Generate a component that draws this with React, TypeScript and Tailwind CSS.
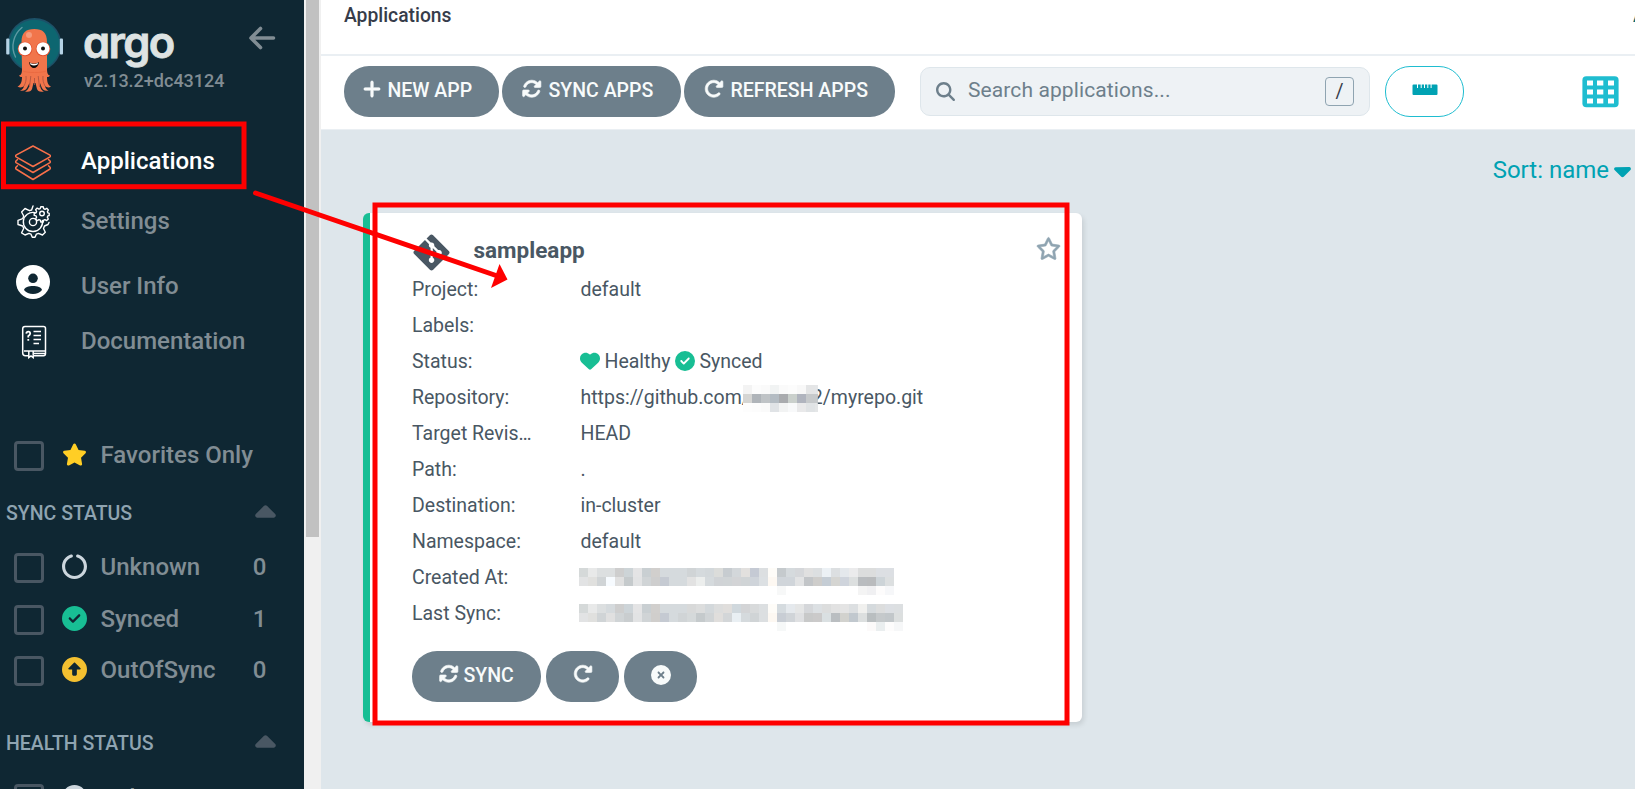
import type { ReactNode } from 'react';
import {
  FaCaretDown,
  FaCaretUp,
  FaCircleCheck,
  FaCircleNotch,
  FaCircleQuestion,
  FaCircleUp,
  FaCircleXmark,
  FaGitAlt,
  FaHeart,
  FaMagnifyingGlass,
  FaPlus,
  FaRegStar,
  FaRotate,
  FaRotateRight,
  FaStar,
} from 'react-icons/fa6';

const CREATED = [
  'd5d9d9 e8e9e9 dcdfe0 dcdfe0 cecece cdd4d7 e4e4e5 c9cfd2 d1cfcd d5dadd d5dadd d5dadd d0d4d6 d5dadd d3d8db dbdcda c7ccd0 d3d7da e2e0de c5cad4 dcdfe1 fefcf8 c5cacd d5dadd d5d7da e0e0e0 dcdfe1 ecf1f5 dcdfe1 e4e8ec ebebec dcdddd dcdddd dcdfe3 dcdfe3',
  'e2e3e4 e0e0de d0d4d6 f7fbff e0e0e0 c5cacc e2e3e4 d0d4d6 cecece c5cad2 d5dadd d5dadd e2e2e2 eceeed d5dadd d0d3d6 d0d4d6 d3d4d6 d0d4d6 cfd4da dce0e3 fdf8f2 d0d5da d0d5da e2e3e4 c2c5c8 cecdcb c5cdd5 d5d5d2 cfd4dc dcdfdf b9bcbf b9bbbd cdd4d8 dcdfe0',
  '- - - - - - - - - - - - - - - - - - - - - - f7f8f8 - - - - - - - - f4f4f4 f0f0f2 fdfcfc f6f7f9',
];
const LAST_SYNC = [
  'd5d9d9 e8e9e9 dcdfe0 d5dadd cecece cdd4d8 e4e4e5 c9cfd2 d1cfcd d5dadd d5dadd d5dadd d8d9d9 dcdddd d3d8db dcdddd e0dedc d0d8dd d3d4d6 d8dadb dcdfe1 fefcf8 d5dbdf e5e9ed e5e6e6 d5d7da dce0e3 dcdddd e2e2e2 e4e4e4 dcdfe1 f0f0ee d5dadd dcdddd dcdfe3 dcdfe1',
  'e2e3e4 e0e0de d0d4d6 e0e0e0 d0d4d6 c9cdcf e2e3e4 d0d4d6 d0cecc c5cad2 d5dadd d0d4d6 d5d9da c5cacc d0d4d6 e0dedc d3d6d8 e9eff3 d5dadd d0d4d6 dcdfe1 fdf8f2 c8cdd4 d0d4d8 dfe0e2 c8c9c9 cbcaca dae0e2 babec1 d2d2ce c1c8ce dcdfdf b9bec0 c5c9cb c2c7ca dcdfdf',
  '- - - - - - - - - - - - - - - - - - - - - - f6f8f8 - - - - - - - - - fcfafa eaeeef fdfcfc f6f7f8',
];
const OWNER = [
  'f3f3f3 fcfcfc fafafa f1f3f3 fafafa fcfcfc f8f8f8 e4e5e6 e4e6e8',
  'd5d5d3 afb4b9 bfc3c6 b4bcc3 a9abae cad0cc b0b4be c6c9cb c6c9cb',
  'fdfdfd fcfcfc fafafa e0e3e6 f2f3f3 f8f9fa e9e9ea e0e3e5 e4e6e7',
];

function Mosaic({ rows }: { rows: string[] }) {
  return (
    <span className="flex flex-col">
      {rows.map((row, i) => (
        <span key={i} className="flex h-[9px]">
          {row.split(' ').map((c, j) => (
            <span
              key={j}
              className="h-[9px] w-[9px] shrink-0"
              style={{ backgroundColor: c === '-' ? 'transparent' : `#${c}` }}
            />
          ))}
        </span>
      ))}
    </span>
  );
}

function Mascot() {
  return (
    <svg width="58" height="76" viewBox="0 0 58 76" className="block">
      <circle cx="28.5" cy="28" r="27" fill="#1d5168" />
      <circle cx="28.5" cy="28" r="25.3" fill="#0d6670" />
      <rect x="0.2" y="21.500" width="3.2" height="16" rx="1" fill="#b5d3e6" />
      <rect x="53.8" y="21.500" width="3.2" height="16" rx="1" fill="#b5d3e6" />
      <path d="M9.5 40 C4 29 8 17 16 10.5" fill="none" stroke="#5e9aa3" strokeWidth="1.4" strokeLinecap="round" />
      <path
        d="M15.5 25 C15.500 15.500 20 12 28.300 12 C36.600 12 41 15.500 41 25 L41 52 C41 56.500 42 58 44 58.500 C43 60 42 60.200 41 60 C41 65 42 68.500 45 69.500 C43 71 40.500 70.500 39 69 C39.500 71.500 41 73 42.500 73.500 C39 74.500 36.500 73 35.500 70 L34 66 C34 71 35 73 38 74.500 C34 75.500 31.500 74 31 72 L29.500 66 H27.500 L26 72 C25.500 74 23 75.500 19 74.500 C22 73 23.300 71 23.500 66 L21.500 70 C20.500 73 17.500 74.500 14 73.500 C16 73 17.500 71.500 18 69 C16.500 70.500 14 71 11.500 69.500 C14.500 68.500 16 65 16 60 C15 60.200 14 60 13 58.500 C15 58 16 56.500 16 52 Z"
        fill="#f1754b"
      />
      <path d="M17 54 C20 56 37 56 40 54" fill="none" stroke="#e8673f" strokeWidth="0.8" />
      <path d="M20 59 C20.500 63 19.500 66 18 69 M24.800 59 L23.500 70 M28.500 61 V68 M32.200 59 L33.500 70 M37 59 C36.500 63 37.500 66 39 69" fill="none" stroke="#a9503d" strokeWidth="0.8" />
      <circle cx="23" cy="18" r="3" fill="#f69b7c" />
      <circle cx="19" cy="32" r="7.300" fill="#e2512f" />
      <circle cx="37" cy="32" r="7.300" fill="#e2512f" />
      <circle cx="19" cy="31.700" r="6.500" fill="#fff" />
      <circle cx="37" cy="31.700" r="6.500" fill="#fff" />
      <circle cx="19" cy="31.500" r="2" fill="#111" />
      <circle cx="37" cy="31.500" r="2" fill="#111" />
      <path d="M23 45 C24 53 32 53 33 45 C30 47.300 26 47.300 23 45Z" fill="#0b0b0b" />
      <path d="M24 45.700 C26.500 47.500 29.500 47.500 32 45.700 L31.500 47.500 C29.500 48.700 26.500 48.700 24.500 47.500Z" fill="#fff" />
    </svg>
  );
}

function LayersIcon() {
  return (
    <svg width="36" height="36" viewBox="0 0 36 36" fill="none" stroke="#f9704a" strokeWidth="1.5" strokeLinejoin="round" strokeLinecap="round" className="block">
      <path d="M18 1 L35 10.200 Q35.800 11 35 11.800 L18 21.500 L1 11.800 Q0.200 11 1 10.200 Z" />
      <path d="M2.500 14.500 L1 16 Q0.300 17 1 17.600 L18 27.500 L35 17.600 Q35.700 17 35 16 L33.500 14.500" />
      <path d="M2.500 20.800 L1 22.300 Q0.300 23.300 1 24 L18 34.500 L35 24 Q35.700 23.300 35 22.300 L33.500 20.800" />
    </svg>
  );
}

function GearsIcon() {
  return (
    <svg width="33" height="33" viewBox="0 0 33 33" fill="none" stroke="#fff" strokeWidth="1.400" strokeLinejoin="round" strokeLinecap="round" className="block">
      <circle cx="16" cy="17" r="3.600" />
      <path d="M18 7.600 A9.600 9.600 0 1 0 25.400 15.500" />
      <path d="M16 1 L14.600 5 L12.500 5.700 L8 3.500 L4.600 7 L6.700 11 L5.700 13.700 L1 15.300 V19.500 L5.700 21 L6.700 23.500 L4.600 27.800 L8 30 L12 28.400 L14 29.200 L15.300 32.300 H18 L19.300 29.200 L21.500 28.400 L25.500 30 L28.300 27.300 L26.500 23.500 L27.500 21 L31 19.500 L32 17.500" />
      <circle cx="25" cy="8.500" r="2.300" />
      <path d="M23.800 1.800 h2.400 l.5 1.900 l1.300 .6 l1.800 -1 l1.600 1.600 l-1 1.800 l.5 1.200 l1.300 .4 v2.200 l-1.400 .4 l-.5 1.300 l1 1.800 l-1.600 1.600 l-1.800 -1 l-1.200 .5 l-.5 1.900 h-2.400 l-.5 -1.900 l-1.300 -.5 l-1.800 1 l-1.600 -1.600 l1 -1.800 l-.5 -1.300 l-1.900 -.5 v-2.200 l1.900 -.5 l.5 -1.200 l-1 -1.800 l1.600 -1.600 l1.800 1 l1.200 -.5 z" />
    </svg>
  );
}

function UserIcon() {
  return (
    <svg width="34" height="34" viewBox="0 0 34 34" className="block">
      <circle cx="17" cy="17" r="17" fill="#fff" />
      <circle cx="17" cy="13.300" r="4.800" fill="#0f2733" />
      <path d="M8 25 C9 19.700 25 19.700 26 25 C22 30.400 12 30.400 8 25Z" fill="#0f2733" />
    </svg>
  );
}

function DocsIcon() {
  return (
    <svg width="26" height="34" viewBox="0 0 26 34" fill="none" stroke="#fff" strokeWidth="1.500" className="block">
      <path d="M8 30.700 H4.500 Q1.700 30.700 1.700 28 V3.800 Q1.700 1.500 4 1.500 H22.500 Q24.500 1.500 24.500 3.500 V28.500 Q24.500 30.700 22.500 30.700 H12.500" />
      <path d="M3 26 H24 M13 28.400 H24" />
      <path d="M7.800 26 V32.600 L10 31 L12.200 32.600 V26" />
      <path d="M5.300 8.600 Q5.500 6.600 7.300 6.600 Q9.200 6.600 9.200 8.600 Q9.200 10 7.300 11 V12.500 M7.300 14 V15.800" strokeWidth="1.800" />
      <path d="M12.500 6.500 H20 M12.500 10.500 H20 M12.500 14.500 H20 M12.500 18.500 H18" strokeWidth="1.600" />
    </svg>
  );
}

function NavItem({ icon, label, active, className }: { icon: ReactNode; label: string; active?: boolean; className: string }) {
  return (
    <div className={`flex shrink-0 items-center ${className}`}>
      <span className="flex w-[66px] shrink-0 justify-center">{icon}</span>
      <span className={`pl-[15px] text-2xl leading-7 font-medium ${active ? 'text-white' : 'text-[#818d94]'}`}>{label}</span>
    </div>
  );
}

function FilterRow({ icon, label, count, className }: { icon: ReactNode; label: string; count?: string; className: string }) {
  return (
    <div className={`flex h-[30px] shrink-0 items-center pl-3.5 ${className}`}>
      <span className="h-[30px] w-[30px] shrink-0 rounded-[4px] border-[3px] border-[#495763]" />
      <span className="-mt-1 ml-[18px] flex w-[25px] justify-center">{icon}</span>
      <span className="-mt-0.5 ml-[13.5px] text-2xl leading-7 font-medium text-[#818d94]">{label}</span>
      {count && <span className="-mt-0.5 mr-[37.5px] ml-auto text-2xl leading-7 font-medium text-[#818d94]">{count}</span>}
    </div>
  );
}

function SectionTitle({ label, className }: { label: string; className: string }) {
  return (
    <div className={`flex h-6 shrink-0 items-center justify-between pr-[23.5px] pl-1.5 ${className}`}>
      <span className="mt-[3px] text-[19.5px] leading-6 font-medium text-[#8fa4b1]">{label}</span>
      <FaCaretUp size={33} className="mt-[2px] -mr-px text-[#495763]" />
    </div>
  );
}

function Sidebar() {
  return (
    <aside className="flex h-full w-[304px] shrink-0 flex-col overflow-hidden bg-[#0f2733]">
      <div className="flex h-[130px] shrink-0 pt-[17px] pl-1.5">
        <Mascot />
        <div className="flex flex-col pl-5">
          <span className="-ml-px h-[46px] font-['Inter'] text-[43.5px] leading-[51px] font-semibold tracking-[-1.6px] text-[#dee3e3] [font-feature-settings:'cv11'] [-webkit-text-stroke:0.8px_#dee3e3]">
            argo
          </span>
          <span className="mt-[8px] text-lg leading-5 font-medium text-[#818d94]">v2.13.2+dc43124</span>
        </div>
        <svg width="28" height="24" viewBox="0 0 28 24" className="mt-[9px] ml-[23px]" fill="none" stroke="#818d94" strokeWidth="3.600" strokeLinecap="round" strokeLinejoin="round">
          <path d="M25.500 12 H3 M12.500 2.500 L3 12 L12.500 21.500" />
        </svg>
      </div>
      <NavItem className="h-[62px]" active label="Applications" icon={<span className="mt-1"><LayersIcon /></span>} />
      <NavItem className="h-[58px]" label="Settings" icon={<GearsIcon />} />
      <NavItem className="h-[72px]" label="User Info" icon={<span className="-mt-[9px]"><UserIcon /></span>} />
      <NavItem className="h-[38px]" label="Documentation" icon={<span className="mt-px ml-px"><DocsIcon /></span>} />

      <FilterRow className="mt-[81px]" label="Favorites Only" icon={<FaStar size={25} className="text-[#ffce25]" />} />
      <SectionTitle className="mt-[29px]" label="SYNC STATUS" />
      <FilterRow className="mt-[29px]" label="Unknown" count="0" icon={<FaCircleNotch size={25} className="text-[#ccd6dd]" />} />
      <FilterRow className="mt-[22px]" label="Synced" count="1" icon={<FaCircleCheck size={25} className="text-[#18be94]" />} />
      <FilterRow className="mt-[21px]" label="OutOfSync" count="0" icon={<FaCircleUp size={25} className="text-[#f4c030]" />} />
      <SectionTitle className="mt-[44px]" label="HEALTH STATUS" />
      <FilterRow className="mt-[30px]" label="Unknown" count="0" icon={<FaCircleQuestion size={25} className="text-[#ccd6dd]" />} />
    </aside>
  );
}

const pill = 'flex h-[51px] items-center rounded-[25px] bg-[#6d7f8b] text-[19.5px] font-medium text-[#f8fbfb]';
const boldIcon = '-mt-[5px] overflow-visible [stroke-width:16px]';

function Toolbar() {
  return (
    <div className="flex h-[74px] shrink-0 items-start border-b border-[#eaeff3] bg-white pt-2.5 pl-[23px]">
      <button className={`${pill} w-[155px] pl-[18px]`}>
        <FaPlus size={20} className={boldIcon} />
        <span className="-mt-px ml-[5.5px]">NEW APP</span>
      </button>
      <button className={`${pill} ml-[3px] w-[179px] pl-5`}>
        <FaRotate size={19.500} className={boldIcon} />
        <span className="-mt-px ml-[7px]">SYNC APPS</span>
      </button>
      <button className={`${pill} ml-[3px] w-[211px] pl-[19.5px]`}>
        <FaRotateRight size={19.500} className={boldIcon} />
        <span className="-mt-px ml-[7.5px]">REFRESH APPS</span>
      </button>
      <div className="mt-[1px] ml-[25px] flex h-[49px] w-[450px] items-center rounded-[10px] border border-[#dee6eb] bg-[#eef2f5] pr-[15px] pl-[15px]">
        <FaMagnifyingGlass size={19} className="text-[#6d7f8b]" />
        <span className="-mt-px ml-[13px] text-[21px] tracking-[0.1px] text-[#6d7f8b]">Search applications...</span>
        <span className="ml-auto flex h-[29px] w-[29px] items-center justify-center rounded-[4px] border border-[#8fa4b1] text-[19.5px] text-[#363c4a]">/</span>
      </div>
      <div className="ml-[15px] flex h-[51px] w-[79px] justify-center rounded-[25px] border-[1.500px] border-[#1fbdd0] pt-[17px]">
        <svg width="26" height="12" viewBox="0 0 26 12" fill="#00a2b3">
          <path d="M1.500 0.500 H5 V4 H6 V0.500 H8.700 V4 H9.700 V0.500 H12 V4 H13 V0.500 H15.300 V4 H16.300 V0.500 H18.600 V4 H19.600 V0.500 H24.500 Q25.500 0.500 25.500 1.500 V10 Q25.500 11 24.500 11 H1.500 Q0.500 11 0.500 10 V1.500 Q0.500 0.500 1.500 0.500Z" />
        </svg>
      </div>
      <svg width="37" height="32" viewBox="0 0 37 32" className="mt-[9.500px] ml-[118px]">
        <rect x="0.400" y="0.300" width="36.200" height="31" rx="4" fill="#1fbdd0" />
        <g fill="#fff">
          <rect x="5" y="4.500" width="6" height="5" /><rect x="15" y="4.500" width="6.300" height="5" /><rect x="26" y="4.500" width="6" height="5" />
          <rect x="5" y="13.500" width="6" height="5" /><rect x="15" y="13.500" width="6.300" height="5" /><rect x="26" y="13.500" width="6" height="5" />
          <rect x="5" y="22.500" width="6" height="5" /><rect x="15" y="22.500" width="6.300" height="5" /><rect x="26" y="22.500" width="6" height="5" />
        </g>
      </svg>
    </div>
  );
}

function Row({ label, children }: { label: string; children?: ReactNode }) {
  return (
    <div className="flex h-9 items-center">
      <span className="w-[168.5px] shrink-0">{label}</span>
      {children}
    </div>
  );
}

function AppCard() {
  return (
    <div className="mt-[21px] ml-[42px] flex h-[509px] w-[719px] flex-col rounded-[6px] border-l-[7px] border-[#18be94] bg-white pt-5 pl-[42px] text-[19.5px] text-[#495763] shadow-[2px_3px_5px_rgba(0,0,0,0.1)]">
      <div className="flex h-[39px] items-center">
        <FaGitAlt size={41} className="-mt-px -ml-[1px] text-[#495763]" />
        <span className="-mt-[3px] ml-[21.5px] text-[22.5px] font-bold">sampleapp</span>
        <FaRegStar size={25} className="-mt-[8px] mr-[21.5px] ml-auto overflow-visible text-[#8fa4b1] [stroke-width:14px]" />
      </div>
      <Row label="Project:">default</Row>
      <Row label="Labels:" />
      <Row label="Status:">
        <FaHeart size={20} className="-mt-[3px] -ml-[0.5px] text-[#18be94]" />
        <span className="ml-[4.5px]">Healthy</span>
        <FaCircleCheck size={20} className="-mt-[3px] ml-[5px] text-[#18be94]" />
        <span className="ml-[4px]">Synced</span>
      </Row>
      <Row label="Repository:">
        <span>https://github.com/</span>
        <span className="mt-px -ml-[7px] w-[75px] overflow-hidden"><Mosaic rows={OWNER} /></span>
        <span className="-ml-[6px] [clip-path:inset(0_0_0_6px)]">2/myrepo.git</span>
      </Row>
      <Row label="Target Revis…">HEAD</Row>
      <Row label="Path:">.</Row>
      <Row label="Destination:">in-cluster</Row>
      <Row label="Namespace:">default</Row>
      <Row label="Created At:"><span className="mt-[7px] -ml-[2px]"><Mosaic rows={CREATED} /></span></Row>
      <Row label="Last Sync:"><span className="mt-[7px] -ml-[2px]"><Mosaic rows={LAST_SYNC} /></span></Row>
      <div className="mt-[19px] flex gap-[5px]">
        <button className={`${pill} w-[129px] pl-[27px]`}>
          <FaRotate size={19.500} className={boldIcon} />
          <span className="-mt-px ml-[5px]">SYNC</span>
        </button>
        <button className={`${pill} w-[73px] justify-center`}>
          <FaRotateRight size={19.500} className={boldIcon} />
        </button>
        <button className={`${pill} w-[73px] justify-center`}>
          <FaCircleXmark size={20} className="-mt-1" />
        </button>
      </div>
    </div>
  );
}

function Annotations() {
  return (
    <svg width="1635" height="789" viewBox="0 0 1635 789" className="pointer-events-none absolute top-0 left-0" fill="none" stroke="#fe0000" strokeWidth="5">
      <rect x="3.500" y="124" width="240.500" height="62.700" />
      <rect x="375" y="205" width="692" height="518" />
      <path d="M255.500 193 L496 275.500" strokeLinecap="round" />
      <path d="M499.500 264 L507.500 279.500 L491 288 Z" fill="#fe0000" stroke="none" />
    </svg>
  );
}

export default function App() {
  return (
    <div className="relative flex h-[789px] w-[1635px] overflow-hidden bg-[#dee6eb] font-['Roboto',sans-serif]">
      <Sidebar />
      <div className="h-full w-[17px] shrink-0 bg-[#f0f0f0] pl-[2px]">
        <div className="h-[537px] w-[13px] bg-[#c1c1c1]" />
      </div>
      <main className="flex min-w-0 flex-1 flex-col">
        <header className="flex h-14 shrink-0 items-start justify-between border-b-2 border-[#eaeff3] bg-white pl-[23px]">
          <span className="mt-[4px] text-[19.3px] leading-6 font-medium text-[#363c4a]">Applications</span>
          <span className="mt-[4px] w-[2px] overflow-hidden text-[19.5px] leading-6 font-medium whitespace-nowrap text-[#006d78]">APPLICATIONS TILES</span>
        </header>
        <Toolbar />
        <div className="flex h-[62px] shrink-0 items-center justify-end pt-[18px] text-2xl text-[#00a2b3]">
          Sort: name
          <FaCaretDown size={27} className="-mr-px" />
        </div>
        <AppCard />
      </main>
      <Annotations />
    </div>
  );
}
